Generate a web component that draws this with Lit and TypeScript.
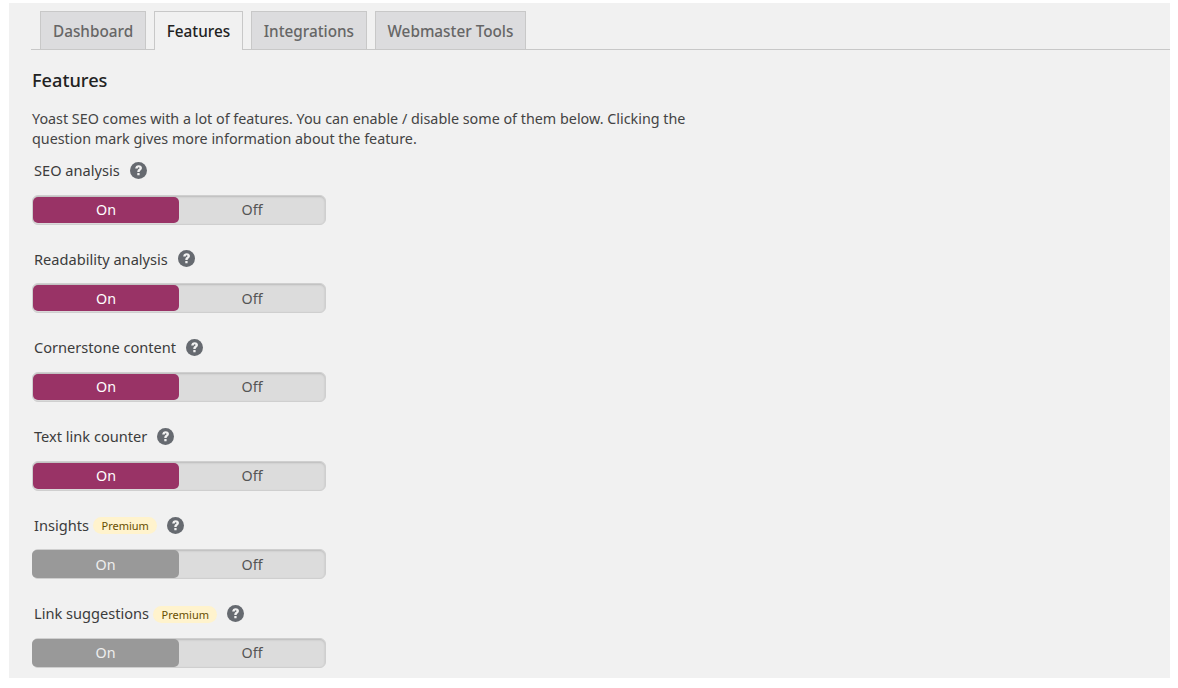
import { LitElement, html, css } from "lit";
import { customElement } from "lit/decorators.js";

const features = [
  { name: "SEO analysis", on: true },
  { name: "Readability analysis", on: true },
  { name: "Cornerstone content", on: true },
  { name: "Text link counter", on: true },
  { name: "Insights", on: false, premium: true },
  { name: "Link suggestions", on: false, premium: true },
];

@customElement("app-root")
export class AppRoot extends LitElement {
  static styles = css`
    :host { display: block; height: 688px; background: #fff; overflow: hidden;
      font-family: "Noto Sans", "Open Sans", sans-serif; color: #444; }
    .panel { margin: 3px 8px 0 9px; height: 675px; background: #f1f1f1; padding-top: 8px; box-sizing: border-box; overflow: hidden; }
    .tabs { display: flex; gap: 7.5px; height: 38px; margin-left: 22px; padding-left: 9px; border-bottom: 1px solid #c8c8c8; }
    .tab { height: 38px; padding: 0 12px; box-sizing: border-box; display: flex; align-items: center;
      background: #dcdcde; border: 1px solid #c8c8c8; border-bottom: none; font-size: 15.3px; font-weight: 500; color: #666; }
    .tab.active { background: #f1f1f1; color: #222; height: 39px; padding-bottom: 1px; }
    .body { padding-left: 23px; }
    h2 { margin: 18px 0 0; font-size: 18.2px; line-height: 24px; font-weight: 500; color: #222; }
    p { margin: 17px 0 0; width: 680px; font-size: 14.34px; line-height: 20px; color: #444; }
    .rows { margin-top: 9px; }
    .row { height: 88.7px; box-sizing: border-box; padding-left: 2px; }
    .label { display: flex; align-items: center; height: 24px; font-size: 14.6px; color: #3c3c3c; }
    .q { margin-left: 10px; width: 17px; height: 17px; flex: none; }
    .badge { margin: 2px 10px 0 4px; height: 17px; padding: 0 8.5px; border-radius: 9px; background: #fff3cd; font-size: 11px; line-height: 17px; color: #674e00; }
    .badge + .q { margin-left: 0; margin-top: 1px; }
    .switch { margin: 12.5px 0 0 -2px; width: 294px; height: 30px; box-sizing: border-box; padding: 1px 2px 1px 0; display: flex; background: #dcdcdc; border: 1px solid #cfcfcf; border-radius: 6px; box-shadow: inset 0 1px 2px rgba(0,0,0,.15); font-size: 14.3px; }
    .on { width: 146px; display: flex; align-items: center; justify-content: center; color: #fff; background: #993366; border-radius: 5px; }
    .on.off-state { background: #999; width: 147px; margin: -1px 0 -1px -1px; color: #eee; }
    .off { flex: 1; display: flex; align-items: center; justify-content: center; padding-left: 2px; color: #555; }
  `;

  private q() {
    return html`<svg class="q" viewBox="0 0 17 17"><circle cx="8.5" cy="8.5" r="8.5" fill="#666a70"/><path d="M5.2 6.5C5.3 4.4 6.7 3.2 8.7 3.2c2 0 3.3 1.2 3.3 2.8 0 2.3-2.4 2.3-2.4 4H7.3c0-2.8 2.2-2.7 2.2-3.9 0-.5-.3-.8-.8-.8-.6 0-.9.4-1 1.2zM7.3 10.9h2.3v2.3H7.3z" fill="#f1f1f1"/></svg>`;
  }

  render() {
    return html`<div class="panel">
      <div class="tabs">
        ${["Dashboard", "Features", "Integrations", "Webmaster Tools"].map(
          (t) => html`<div class="tab ${t === "Features" ? "active" : ""}">${t}</div>`
        )}
      </div>
      <div class="body">
        <h2>Features</h2>
        <p>Yoast SEO comes with a lot of features. You can enable / disable some of them below. Clicking the question mark gives more information about the feature.</p>
        <div class="rows">
          ${features.map(
            (f) => html`<div class="row">
              <div class="label">${f.name}${f.premium ? html`<span class="badge">Premium</span>` : ""}${this.q()}</div>
              <div class="switch">
                <div class="on ${f.on ? "" : "off-state"}">On</div>
                <div class="off">Off</div>
              </div>
            </div>`
          )}
        </div>
      </div>
    </div>`;
  }
}
